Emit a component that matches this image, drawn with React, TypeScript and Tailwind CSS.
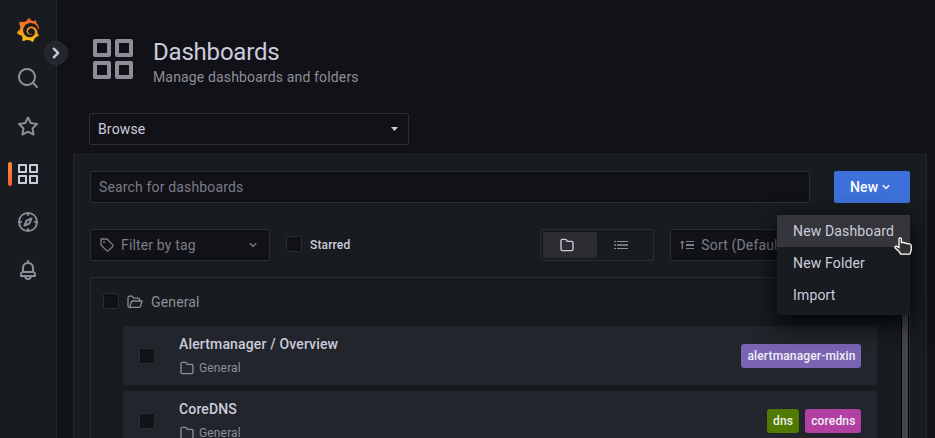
import type { ReactNode } from "react";
import { SiGrafana } from "react-icons/si";

const paths = {
  search:
    "M21.71,20.29,18,16.61A9,9,0,1,0,16.61,18l3.68,3.68a1,1,0,0,0,1.42,0A1,1,0,0,0,21.71,20.29ZM11,18a7,7,0,1,1,7-7A7,7,0,0,1,11,18Z",
  star: "M22,9.67A1,1,0,0,0,21.14,9l-5.69-.83L12.9,3a1,1,0,0,0-1.8,0L8.55,8.16,2.86,9a1,1,0,0,0-.81.68,1,1,0,0,0,.25,1l4.13,4-1,5.68A1,1,0,0,0,6.9,21.44L12,18.77l5.1,2.67a.93.93,0,0,0,.46.12,1,1,0,0,0,.59-.19,1,1,0,0,0,.4-1l-1-5.68,4.13-4A1,1,0,0,0,22,9.67Zm-6.15,4a1,1,0,0,0-.29.88l.72,4.2-3.76-2a1.06,1.06,0,0,0-.94,0l-3.76,2,.72-4.2a1,1,0,0,0-.29-.88l-3-3,4.21-.61a1,1,0,0,0,.76-.55L12,5.7l1.88,3.82a1,1,0,0,0,.76.55l4.21.61Z",
  apps: "M10,13H3a1,1,0,0,0-1,1v7a1,1,0,0,0,1,1h7a1,1,0,0,0,1-1V14A1,1,0,0,0,10,13ZM9,20H4V15H9ZM21,2H14a1,1,0,0,0-1,1v7a1,1,0,0,0,1,1h7a1,1,0,0,0,1-1V3A1,1,0,0,0,21,2ZM20,9H15V4h5Zm1,4H14a1,1,0,0,0-1,1v7a1,1,0,0,0,1,1h7a1,1,0,0,0,1-1V14A1,1,0,0,0,21,13Zm-1,7H15V15h5ZM10,2H3A1,1,0,0,0,2,3v7a1,1,0,0,0,1,1h7a1,1,0,0,0,1-1V3A1,1,0,0,0,10,2ZM9,9H4V4H9Z",
  compass:
    "M12,2A10,10,0,1,0,22,12,10,10,0,0,0,12,2Zm1,17.93V19a1,1,0,0,0-2,0v.93A8,8,0,0,1,4.07,13H5a1,1,0,0,0,0-2H4.07A8,8,0,0,1,11,4.07V5a1,1,0,0,0,2,0V4.07A8,8,0,0,1,19.93,11H19a1,1,0,0,0,0,2h.93A8,8,0,0,1,13,19.93ZM15.14,7.55l-5,2.12a1,1,0,0,0-.52.52l-2.12,5a1,1,0,0,0,.21,1.1,1,1,0,0,0,.7.29.93.93,0,0,0,.4-.08l5-2.12a1,1,0,0,0,.52-.52l2.12-5a1,1,0,0,0-1.31-1.31Zm-2.49,5.1-2.28,1,1-2.28,2.28-1Z",
  bell: "M18,13.18V10a6,6,0,0,0-5-5.91V3a1,1,0,0,0-2,0V4.09A6,6,0,0,0,6,10v3.18A3,3,0,0,0,4,16v2a1,1,0,0,0,1,1H8.14a4,4,0,0,0,7.72,0H19a1,1,0,0,0,1-1V16A3,3,0,0,0,18,13.18ZM8,10a4,4,0,0,1,8,0v3H8Zm4,10a2,2,0,0,1-1.72-1h3.44A2,2,0,0,1,12,20Zm6-3H6V16a1,1,0,0,1,1-1H17a1,1,0,0,1,1,1Z",
  folder:
    "M19,5.5H12.72l-.32-1a3,3,0,0,0-2.84-2H5a3,3,0,0,0-3,3v13a3,3,0,0,0,3,3H19a3,3,0,0,0,3-3V8.5A3,3,0,0,0,19,5.5Zm1,13a1,1,0,0,1-1,1H5a1,1,0,0,1-1-1V5.5a1,1,0,0,1,1-1H9.56a1,1,0,0,1,.95.68l.54,1.64A1,1,0,0,0,12,7.5h7a1,1,0,0,1,1,1Z",
  angleDown:
    "M17,9.17a1,1,0,0,0-1.41,0L12,12.71,8.46,9.17a1,1,0,0,0-1.41,0,1,1,0,0,0,0,1.42l4.24,4.24a1,1,0,0,0,1.42,0L17,10.59A1,1,0,0,0,17,9.17Z",
  angleRight:
    "M14.83,11.29,10.59,7.05a1,1,0,0,0-1.42,0,1,1,0,0,0,0,1.41L12.71,12,9.17,15.54a1,1,0,0,0,0,1.41,1,1,0,0,0,.71.29,1,1,0,0,0,.71-.29l4.24-4.24A1,1,0,0,0,14.83,11.29Z",
  tag: "M7.5,6A1.5,1.5,0,1,0,9,7.5,1.5,1.5,0,0,0,7.5,6Zm13.62,4.71L12.71,2.29A1,1,0,0,0,12,2H3A1,1,0,0,0,2,3v9a1,1,0,0,0,.29.71l8.42,8.41a3,3,0,0,0,4.24,0L21.12,15a3,3,0,0,0,0-4.24Zm-1.41,2.82h0l-6.18,6.17a1,1,0,0,1-1.41,0L4,11.59V4h7.59l8.12,8.12a1,1,0,0,1,.29.71A1,1,0,0,1,19.71,13.53Z",
};

function Icon({ name, className }: { name: keyof typeof paths; className: string }) {
  return (
    <svg viewBox="0 0 24 24" fill="currentColor" className={`shrink-0 ${className}`}>
      <path d={paths[name]} />
    </svg>
  );
}

function FolderOpen() {
  return (
    <svg viewBox="0 0 16 16" fill="none" stroke="currentColor" strokeWidth="1.3" strokeLinejoin="round" className="size-4 shrink-0">
      <path d="M3 13.3H2.4A1.4 1.4 0 0 1 1 11.9V3.6A1.4 1.4 0 0 1 2.4 2.2H5.4L6.5 4.2H11.2A1.4 1.4 0 0 1 12.6 5.6V7M2.6 13.3H12.3A1.4 1.4 0 0 0 13.6 12.3L15 7H5.6A1.4 1.4 0 0 0 4.3 8L3 12.8" />
    </svg>
  );
}

function ListIcon() {
  return (
    <svg viewBox="0 0 14 10" fill="currentColor" className="h-2.5 w-3.5">
      <path d="M0 1h2v1H0zM3 1h11v1H3zM0 8h2v1H0zM3 8h11v1H3z" />
      <path d="M0 4h2v2H0zM3 4h11v2H3z" opacity="0.75" />
    </svg>
  );
}

function SortIcon() {
  return (
    <svg viewBox="0 0 14 10" fill="currentColor" className="h-2.5 w-3.5 shrink-0">
      <path d="M2.3 0.6 4.6 3H3V9H1.6V3H0zM6 1h8v1H6zM6 4h8v2H6zM6 8h8v1H6z" />
    </svg>
  );
}

function Logo() {
  return (
    <>
      <svg className="absolute size-0">
        <defs>
          <linearGradient id="flame" x1="0" y1="1" x2="0" y2="0">
            <stop offset="0" stopColor="#fcc50f" />
            <stop offset="1" stopColor="#f05a28" />
          </linearGradient>
        </defs>
      </svg>
      <SiGrafana fill="url(#flame)" className="size-6" />
    </>
  );
}

function Checkbox() {
  return <span className="size-4 shrink-0 rounded-xs border border-[#2c2d32] bg-[#111217]" />;
}

function Tag({ color, children }: { color: string; children: ReactNode }) {
  return (
    <span className={`flex h-6 items-center justify-center rounded-[3px] pr-[5.5px] pl-[6.5px] text-[12px] font-medium tracking-[0.15px] text-[#f0f0f5] ${color}`}>
      {children}
    </span>
  );
}

function Row({ title, children }: { title: string; children: ReactNode }) {
  return (
    <div className="flex h-[59px] shrink-0 items-center rounded-xs bg-[#22252b] pr-4 pl-4">
      <Checkbox />
      <div className="ml-6 flex h-full flex-1 flex-col pt-2">
        <span className="text-[14px] leading-5 font-medium tracking-[0.15px]">{title}</span>
        <span className="mt-1 flex items-center gap-1 text-[12px] leading-5 tracking-[0.15px] text-[#8e8e99]">
          <Icon name="folder" className="size-4" />
          General
        </span>
      </div>
      <div className="flex gap-1.5">{children}</div>
    </div>
  );
}

export default function App() {
  return (
    <div className="relative flex h-[438px] w-[935px] overflow-hidden bg-[#111217] font-['Roboto',sans-serif] text-[14px] leading-5 tracking-[0.15px] text-[#ccccdc]">
      <aside className="relative flex w-[57px] shrink-0 flex-col items-center border-r border-[#25272c] bg-[#181b1f] pt-[18px] text-[#8e8e99]">
        <Logo />
        <nav className="mt-3 flex flex-col">
          <span className="flex h-12 items-center"><Icon name="search" className="size-6" /></span>
          <span className="flex h-12 items-center"><Icon name="star" className="size-6" /></span>
          <span className="relative flex h-12 items-center text-[#ccccdc]">
            <span className="absolute top-3 -left-2 h-6 w-1 rounded-xs bg-linear-to-t from-[#f55f3e] to-[#ff8833]" />
            <Icon name="apps" className="size-6" />
          </span>
          <span className="flex h-12 items-center"><Icon name="compass" className="size-6" /></span>
          <span className="flex h-12 items-center"><Icon name="bell" className="size-6" /></span>
        </nav>
        <span className="absolute top-[41px] left-11 flex size-6 items-center justify-center rounded-full border border-[#2c2e33] bg-[#22252b] text-[#ccccdc]">
          <Icon name="angleRight" className="size-6 stroke-current stroke-[0.5]" />
        </span>
      </aside>

      <main className="flex min-w-0 flex-1 flex-col pr-2 pl-4">
        <header className="flex h-[113px] shrink-0 pt-[35px] pl-4">
          <Icon name="apps" className="size-12 text-[#8e8e99]" />
          <div className="ml-4 flex flex-col">
            <h1 className="pt-0.5 text-[24px] leading-[30px] tracking-[-0.2px]">Dashboards</h1>
            <p className="text-[#8e8e99]">Manage dashboards and folders</p>
          </div>
        </header>
        <div className="ml-4 flex h-8 w-80 shrink-0 items-center justify-between rounded-xs border border-[#2d2e33] pr-2.5 pl-2">
          Browse
          <svg viewBox="0 0 7 4" className="h-1 w-[7px]" fill="currentColor"><path d="M0 0h7L3.5 4z" /></svg>
        </div>

        <section className="mt-[9px] flex h-[400px] shrink-0 flex-col border border-[#25272c] bg-[#181b1f] px-4 pt-4">
          <div className="flex justify-between">
            <div className="flex h-8 w-[720px] items-center rounded-xs border border-[#2d2e33] bg-[#111217] pl-2 text-[#7b7c86]">
              Search for dashboards
            </div>
            <button className="flex h-8 w-[76px] items-center rounded-xs bg-[#3d71d9] pl-4 font-medium text-white">
              New
              <Icon name="angleDown" className="size-4" />
            </button>
          </div>

          <div className="mt-[26px] flex h-8 items-center">
            <div className="flex h-8 w-[180px] items-center rounded-xs border border-[#2d2e33] bg-[#111217] pr-2 pl-2 text-[#7b7c86]">
              <Icon name="tag" className="size-4" />
              <span className="ml-1.5 flex-1">Filter by tag</span>
              <Icon name="angleDown" className="size-4" />
            </div>
            <label className="ml-4 flex items-center gap-2 text-[12px] font-medium"><span className="flex pb-0.5"><Checkbox /></span>Starred</label>
            <div className="ml-[190px] flex h-8 w-[114px] rounded-xs border border-[#2d2e33] p-0.5">
              <span className="flex w-[54px] items-center rounded-xs bg-[#2b2d32] pl-4">
                <Icon name="folder" className="size-4" />
              </span>
              <span className="flex flex-1 items-center pl-[17px] text-[#8e8e99]"><ListIcon /></span>
            </div>
            <div className="ml-4 flex h-8 flex-1 items-center rounded-xs border border-[#2d2e33] bg-[#111217] pl-[9px] text-[#7b7c86]">
              <SortIcon />
              <span className="ml-[7px] whitespace-nowrap">Sort (Default A–Z)</span>
            </div>
          </div>

          <div className="mt-4 flex h-[300px] border border-[#2d2e33]">
            <div className="flex w-[786px] shrink-0 flex-col pl-8">
              <div className="-ml-5 flex h-12 shrink-0 items-center text-[#8e8e99]">
                <span className="flex pb-0.5"><Checkbox /></span>
                <span className="ml-2 flex pb-px"><FolderOpen /></span>
                <span className="ml-2">General</span>
              </div>
              <div className="flex flex-col gap-1.5">
                <Row title="Alertmanager / Overview">
                  <Tag color="bg-[#7b64b3]">alertmanager-mixin</Tag>
                </Row>
                <Row title="CoreDNS">
                  <Tag color="bg-[#517a00]">dns</Tag>
                  <Tag color="bg-[#b240a2]">coredns</Tag>
                </Row>
              </div>
            </div>
            <div className="ml-auto w-2 border-x border-black bg-[#44454f]" />
          </div>
        </section>
      </main>

      <div className="absolute top-[215px] left-[777px] flex h-[100px] w-[133px] flex-col rounded-xs bg-[#181b1f] shadow-[0_8px_24px_#010409]">
        <span className="flex h-8 items-center bg-[#34363b] pl-4">New Dashboard</span>
        <span className="flex h-8 items-center pl-4">New Folder</span>
        <span className="flex h-8 items-center pl-4">Import</span>
      </div>
      <svg viewBox="0 0 18 18" className="absolute top-[237px] left-[894px] size-[18px]">
        <path
          d="M5 1.9C5 .4 7.4.4 7.4 1.9V5.8C8.6 5.2 10.2 5.4 10.5 6.2 11.5 5.7 12.8 6 13.2 6.9 14.6 6.4 17.2 6.7 17.2 8.6V13.4L15.9 17.1H6.6L5.2 14.6 1.2 11C.3 9.8 1.7 8.7 2.9 9.4L5 10.8Z"
          fill="#303030"
          stroke="#fff"
          strokeWidth="1.3"
          strokeLinejoin="round"
        />
      </svg>
    </div>
  );
}
